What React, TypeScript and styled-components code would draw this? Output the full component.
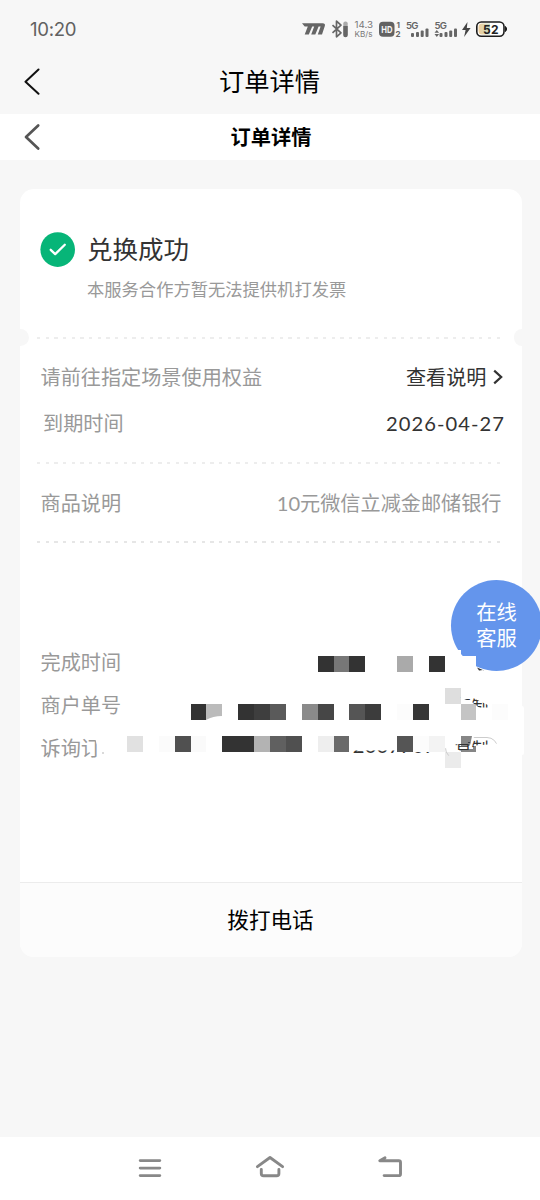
import React from 'react';
import styled, { createGlobalStyle } from 'styled-components';

const Global = createGlobalStyle`
  * { box-sizing: border-box; }
  body {
    margin: 0;
    background: #f7f7f7;
    font-family: Lato, "Noto Sans CJK SC", sans-serif;
  }
`;

const Screen = styled.div`
  position: relative;
  width: 540px;
  height: 1200px;
  display: flex;
  flex-direction: column;
  overflow: hidden;
  background: #f7f7f7;
`;

const StatusBar = styled.div`
  height: 58px;
  padding: 0 31px 0 30px;
  display: flex;
  align-items: center;
  justify-content: space-between;
`;

const Clock = styled.span`
  font: 400 18.6px/24px Inter, sans-serif;
  letter-spacing: -0.3px;
  color: #616161;
`;

const StatusIcons = styled.svg`
  display: block;
  width: 207px;
  height: 24px;
  font-family: Inter, sans-serif;
`;

const TitleBar = styled.header<{ $sub?: boolean }>`
  height: ${p => (p.$sub ? 46 : 56)}px;
  padding: 0 24px ${p => (p.$sub ? 0 : 11)}px;
  display: grid;
  grid-template-columns: 60px 1fr ${p => (p.$sub ? 58 : 61)}px;
  align-items: center;
  background: ${p => (p.$sub ? '#fff' : 'transparent')};
`;

const BackIcon = styled.svg<{ $color: string; $width: number }>`
  width: 18px;
  height: 28px;
  fill: none;
  stroke: ${p => p.$color};
  stroke-width: ${p => p.$width};
  stroke-linecap: round;
  stroke-linejoin: round;
`;

const Title = styled.h1<{ $sub?: boolean }>`
  margin: 0;
  text-align: center;
  color: #000;
  font-size: ${p => (p.$sub ? 20.2 : 25.3)}px;
  font-weight: ${p => (p.$sub ? 700 : 400)};
  line-height: 36px;
`;

const Card = styled.main`
  width: 502px;
  height: 768px;
  margin: 29px 0 0 20px;
  display: flex;
  flex-direction: column;
  background: #fff;
  border-radius: 14px;
  overflow: hidden;
`;

const Result = styled.section`
  height: 140px;
  padding: 42px 20px 0;
  display: flex;
  gap: 12px;
`;

const SuccessIcon = styled.svg`
  width: 35px;
  height: 35px;
  margin-top: 1px;
`;

const ResultText = styled.div`
  display: flex;
  flex-direction: column;
`;

const ResultTitle = styled.h2`
  margin: 0;
  font-size: 25.5px;
  font-weight: 400;
  line-height: 36px;
  color: #333;
`;

const ResultNote = styled.p`
  margin: 10px 0 0;
  font-size: 17.3px;
  line-height: 26px;
  color: #999;
`;

const TicketEdge = styled.div`
  height: 17px;
  display: flex;
  align-items: center;
`;

const Notch = styled.span<{ $right?: boolean }>`
  width: 8.5px;
  height: 17px;
  margin-left: ${p => (p.$right ? 'auto' : 0)};
  margin-right: ${p => (p.$right ? 0 : 8.5)}px;
  background: #f7f7f7;
  border-radius: ${p => (p.$right ? '9px 0 0 9px' : '0 9px 9px 0')};
`;

const Dashes = styled.div<{ $color: string; $width: number; $thick?: number }>`
  width: ${p => p.$width}px;
  height: ${p => p.$thick ?? 1.5}px;
  background: repeating-linear-gradient(90deg, ${p => p.$color} 0 3.2px, transparent 3.2px 8.67px);
`;

const Divider = styled.div`
  height: 2px;
  padding-left: 17px;
`;

const Row = styled.div<{ $height: number; $inset?: string }>`
  height: ${p => p.$height}px;
  padding: 0 ${p => p.$inset ?? '20.5px'};
  display: flex;
  align-items: center;
  justify-content: space-between;
  font-size: 20.15px;
  line-height: 30px;
`;

const Label = styled.span`
  color: #999;
  white-space: nowrap;
`;

const Value = styled.span<{ $muted?: boolean; $spacing?: number }>`
  display: flex;
  align-items: center;
  gap: 6px;
  color: ${p => (p.$muted ? '#999' : '#333')};
  letter-spacing: ${p => p.$spacing ?? 0}px;
  white-space: nowrap;
`;

const TopRows = styled.section`
  height: 116px;
  padding-top: 7px;
`;

const Records = styled.section`
  flex: 1;
  padding-top: 97px;
`;

const RecordValue = styled.span`
  display: flex;
  align-items: center;
  gap: 9px;
  color: #333;
`;

const SerialTail = styled.span`
  padding-bottom: 5px;
  letter-spacing: 0.2px;
  clip-path: inset(20.5px 0 0 0);
`;

const CopyButton = styled.button<{ $clip: string }>`
  position: relative;
  z-index: 3;
  width: 53px;
  height: 22px;
  padding: 0;
  border: 1px solid #ccc;
  border-radius: 13px;
  background: transparent;
  color: #333;
  font: 400 17px/20px "Noto Sans CJK SC", sans-serif;
  clip-path: ${p => p.$clip};
`;

const CallButton = styled.button`
  height: 75px;
  padding: 0 1px 2px 0;
  border: 0;
  border-top: 1px solid #ececec;
  background: #fcfcfc;
  color: #000;
  font: 400 21.6px/32px "Noto Sans CJK SC", sans-serif;
`;

const ServiceBubble = styled.button`
  position: absolute;
  z-index: 1;
  left: 451px;
  top: 580px;
  width: 91px;
  height: 91px;
  padding: 0 0 4px;
  border: 0;
  border-radius: 50%;
  background: #6495ec;
  color: #fff;
  font: 400 20.3px/26px "Noto Sans CJK SC", sans-serif;
`;

const Mosaic = styled.svg`
  position: absolute;
  z-index: 2;
  left: 90px;
  top: 640px;
  width: 450px;
  height: 140px;
  pointer-events: none;
`;

const NavBar = styled.nav`
  height: 63px;
  margin-top: auto;
  padding: 0 135px;
  display: flex;
  align-items: center;
  justify-content: space-between;
  background: #fff;
`;

const NavIcon = styled.svg`
  width: 30px;
  height: 28px;
  fill: none;
  stroke: #888;
  stroke-width: 2.9;
  stroke-linecap: round;
  stroke-linejoin: round;
`;

type Tile = [x: number, y: number, width: number, color: string];

const tiles: Tile[] = [
  [318, 656, 16, '#333'], [334, 656, 15, '#777'], [349, 656, 16, '#333'],
  [397, 656, 16, '#aaa'], [429, 656, 16, '#333'], [461, 656, 15, '#fff'],
  [445, 688, 16, '#dedede'],
  [191, 704, 15, '#333'], [206, 704, 16, '#bbb'], [238, 704, 16, '#333'],
  [254, 704, 16, '#3e3e3e'], [270, 704, 16, '#5a5a5a'], [302, 704, 16, '#8a8a8a'],
  [318, 704, 16, '#464646'], [349, 704, 16, '#555'], [365, 704, 16, '#3c3c3c'],
  [397, 704, 16, '#fcfcfc'], [413, 704, 16, '#363636'], [461, 704, 15, '#c4c4c4'],
  [492, 704, 16, '#fcfcfc'],
  [127, 736, 16, '#e1e1e1'], [159, 736, 16, '#fbfbfb'], [175, 736, 16, '#505050'],
  [191, 736, 15, '#fafafa'], [222, 736, 32, '#333'], [254, 736, 16, '#b3b3b3'],
  [270, 736, 16, '#606060'], [286, 736, 16, '#505050'], [318, 736, 16, '#eee'],
  [334, 736, 15, '#6a6a6a'], [397, 736, 16, '#555'], [413, 736, 16, '#fcfcfc'],
  [429, 736, 16, '#f3f3f3'], [461, 736, 15, '#868686'], [445, 752, 16, '#ebebeb'],
];

const SignalBars = ({ x }: { x: number }) => (
  <g fill="#666">
    <rect x={x} y="16" width="3" height="4" rx="1" />
    <rect x={x + 5} y="15" width="3" height="5" rx="1" />
    <rect x={x + 9.7} y="13.5" width="3" height="6.5" rx="1" />
    <rect x={x + 14.5} y="11.5" width="3" height="8.5" rx="1" />
  </g>
);

export default function App() {
  return (
    <Screen>
      <Global />
      <StatusBar>
        <Clock>10:20</Clock>
        <StatusIcons viewBox="302 0 207 24">
          <path
            d="M302 6.2h20.6q2.9 0 2.3 2.6L322 17.4h-4.2l2.8-8h-2l-3.3 8h-4.1l3-8h-2l-3.4 8h-4.1l3.1-8h-3.1z"
            fill="#666"
          />
          <path
            d="M332.5 8.2l8.5 7.6-4.5 4V4.2l4.5 4-8.5 7.6"
            fill="none"
            stroke="#666"
            strokeWidth="1.7"
            strokeLinejoin="round"
          />
          <rect x="343.3" y="4.5" width="4.4" height="15.5" rx="2" fill="#aaa" />
          <path d="M343.3 9h4.4v9a2 2 0 0 1-4.4 0z" fill="#666" />
          <text x="354.6" y="11.2" fontSize="8.8" textLength="18.5" lengthAdjust="spacingAndGlyphs" fill="#777">14.3</text>
          <text x="354.6" y="19.8" fontSize="7.8" textLength="18" lengthAdjust="spacingAndGlyphs" fill="#777">KB/s</text>
          <rect x="379" y="4.8" width="15.5" height="15" rx="4" fill="#626262" />
          <text x="381.2" y="15.8" fontSize="9.5" fontWeight="700" textLength="11.2" lengthAdjust="spacingAndGlyphs" fill="#f7f7f7">HD</text>
          <text x="396.6" y="10.8" fontSize="8" fontWeight="700" fill="#666">1</text>
          <text x="395.6" y="20" fontSize="8" fontWeight="700" fill="#666">2</text>
          <text x="406" y="12" fontSize="9.6" fontWeight="600" textLength="12.5" fill="#666">5G</text>
          <SignalBars x={411} />
          <text x="434.5" y="12" fontSize="9.6" fontWeight="600" textLength="12.5" fill="#666">5G</text>
          <path d="M434.5 15.8l2.3-2.8 2.3 2.8zM434.5 17h4.6l-2.3 3z" fill="#666" />
          <SignalBars x={439.5} />
          <path d="M467.5 5l-5.5 8h3.6l-1.5 7 6.5-9h-3.8z" fill="#444" />
          <defs>
            <linearGradient id="charge">
              <stop offset="0" stopColor="#f1cf9c" />
              <stop offset="1" stopColor="#c9dcc4" />
            </linearGradient>
          </defs>
          <rect x="476.8" y="5" width="27.2" height="14.2" rx="4.5" fill="#fff" stroke="#1c1c1c" strokeWidth="1.6" />
          <path d="M482 6.6h8v11h-8q-3.5 0-3.5-3.5v-4q0-3.5 3.5-3.5z" fill="url(#charge)" />
          <path d="M505.5 9.5q2.5 2.5 0 5z" fill="#1c1c1c" stroke="#1c1c1c" />
          <text x="483" y="16.5" fontSize="12" fontWeight="700" textLength="15.5" fill="#222">52</text>
        </StatusIcons>
      </StatusBar>

      <TitleBar>
        <BackIcon viewBox="0 0 18 28" $color="#111" $width={2}>
          <path d="M14.5 2.5L1.5 14.7l13 12" />
        </BackIcon>
        <Title>订单详情</Title>
      </TitleBar>
      <TitleBar $sub>
        <BackIcon viewBox="0 0 18 28" $color="#555" $width={2.7}>
          <path d="M14.2 2.5L2 14l12.2 11.5" />
        </BackIcon>
        <Title $sub>订单详情</Title>
      </TitleBar>

      <Card>
        <Result>
          <SuccessIcon viewBox="0 0 35 35">
            <circle cx="17.7" cy="17.6" r="17.3" fill="#07b578" />
            <path
              d="M10.7 17.8l4.5 4.3 9.6-9.4"
              fill="none"
              stroke="#fff"
              strokeWidth="2.3"
              strokeLinecap="round"
              strokeLinejoin="round"
            />
          </SuccessIcon>
          <ResultText>
            <ResultTitle>兑换成功</ResultTitle>
            <ResultNote>本服务合作方暂无法提供机打发票</ResultNote>
          </ResultText>
        </Result>
        <TicketEdge>
          <Notch />
          <Dashes $color="#ededed" $width={463} $thick={2} />
          <Notch $right />
        </TicketEdge>
        <TopRows>
          <Row $height={47} $inset="18.5px 0 20.5px">
            <Label>请前往指定场景使用权益</Label>
            <Value>
              查看说明
              <svg width="11" height="16" viewBox="0 0 11 16" fill="none" stroke="#333" strokeWidth="2.2">
                <path d="M1.2 1.6L8.2 8l-7 6.4" />
              </svg>
            </Value>
          </Row>
          <Row $height={46} $inset="17px 0 23px">
            <Label>到期时间</Label>
            <Value $spacing={1.05}>2026-04-27</Value>
          </Row>
        </TopRows>
        <Divider><Dashes $color="#ededed" $width={467} /></Divider>
        <Row $height={77}>
          <Label>商品说明</Label>
          <Value $muted>10元微信立减金邮储银行</Value>
        </Row>
        <Divider><Dashes $color="#e6e6e6" $width={467} /></Divider>
        <Records>
          <Row $height={43}>
            <Label>完成时间</Label>
          </Row>
          <Row $height={43} $inset="24px 0 20.5px">
            <Label>商户单号</Label>
            <CopyButton $clip="polygon(15px 2px, 27px 4px, 44px 12px, 44px 14px, 34px 14px, 26px 8px, 15px 4px)">复制</CopyButton>
          </Row>
          <Row $height={43} $inset="24px 0 20.5px">
            <Label>诉询订单号</Label>
            <RecordValue>
              <SerialTail>2007707</SerialTail>
              <CopyButton $clip="polygon(0 12px, 9px 8px, 22px 7px, 30px 0, 53px 0, 53px 7px, 43px 8px, 30px 9px, 24px 14px, 10px 14px, 3px 20px, 0 18px)">复制</CopyButton>
            </RecordValue>
          </Row>
        </Records>
        <CallButton>拨打电话</CallButton>
      </Card>

      <ServiceBubble>在线<br />客服</ServiceBubble>

      <Mosaic viewBox="90 640 450 140">
        <path d="M450 650h11v6h15v16h6v2h-32z" fill="#fff" />
        <path d="M508 706h14q2 0 2 3v44q0 2-2 2h-14z" fill="#fff" />
        <path d="M94 734h54v34h-48q-1-10-2-20-2-6-4-14z" fill="#fff" />
        {tiles.map(([x, y, width, color]) => (
          <rect key={`${x}-${y}`} x={x} y={y} width={width} height="16" fill={color} />
        ))}
        <path d="M206 720q7-4 16-4v4z" fill="#fff" />
        <path d="M461 746h8q5-4 7-10v10h-3v3h-12z" fill="#fff" />
        <path d="M472 736h4v3q-2 5-6 7z" fill="#fff" />
        <path d="M477 667.5l7 3h-5z" fill="#333" />
        <path d="M476 672l7-2v4h-7z" fill="#fff" />
        <circle cx="103" cy="753" r="0.7" fill="#999" />
      </Mosaic>

      <NavBar>
        <NavIcon viewBox="0 0 30 28">
          <path d="M5.2 5.6h19.6M5.2 13.1h19.6M5.2 20.6h19.6" />
        </NavIcon>
        <NavIcon viewBox="0 0 30 28">
          <path d="M2.4 11.6L15 2.5l12.6 9.1M6.3 14.4v4q0 2.3 2.3 2.3h13q2.3 0 2.3-2.3v-4" />
        </NavIcon>
        <NavIcon viewBox="0 0 30 28">
          <path d="M10 2.8L4.8 5.7h19q1.7 0 1.7 1.7v11.5q0 1.7-1.7 1.7H9.1" />
        </NavIcon>
      </NavBar>
    </Screen>
  );
}
